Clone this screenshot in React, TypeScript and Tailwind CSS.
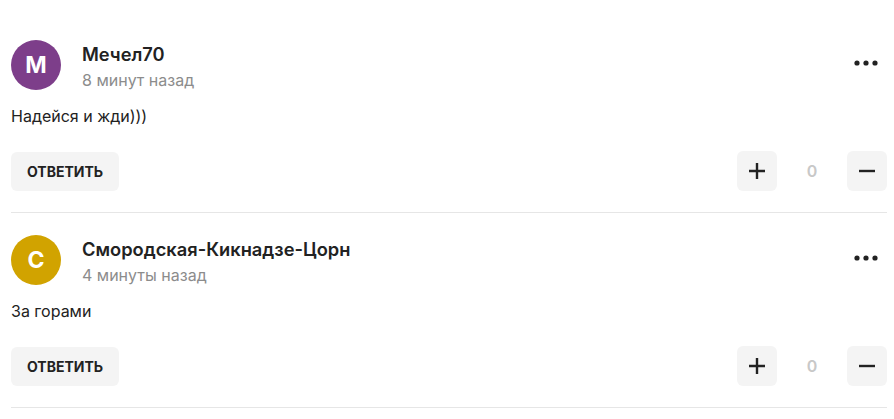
import React from 'react';

interface Comment {
  initial: string;
  color: string;
  name: string;
  time: string;
  text: string;
}

const comments: Comment[] = [
  { initial: 'М', color: 'bg-[#7d3e8a]', name: 'Мечел70', time: '8 минут назад', text: 'Надейся и жди)))' },
  { initial: 'С', color: 'bg-[#d1a300]', name: 'Смородская-Кикнадзе-Цорн', time: '4 минуты назад', text: 'За горами' },
];

const PlusIcon = () => (
  <svg width="18" height="18" viewBox="0 0 18 18" fill="none" stroke="#222" strokeWidth={2.4}>
    <path d="M9 1v16M1 9h16" />
  </svg>
);

const MinusIcon = () => (
  <svg width="18" height="18" viewBox="0 0 18 18" fill="none" stroke="#222" strokeWidth={2.4}>
    <path d="M1 9h16" />
  </svg>
);

const DotsIcon = () => (
  <svg width="24" height="6" viewBox="0 0 24 6" fill="#222">
    <circle cx="3" cy="3" r="2.6" />
    <circle cx="12" cy="3" r="2.6" />
    <circle cx="21" cy="3" r="2.6" />
  </svg>
);

function CommentItem({ c }: { c: Comment }) {
  return (
    <div className="pt-[22px] pb-[21px] border-b border-[#e6e6e6]">
      <div className="flex items-start">
        <div className={`w-[50px] h-[50px] rounded-full ${c.color} flex items-center justify-center text-white text-[23px] font-bold shrink-0`}>
          {c.initial}
        </div>
        <div className="ml-[21px] flex-1 pt-[2px]">
          <div className="text-[18.3px] font-semibold text-[#222] leading-[24px]">{c.name}</div>
          <div className="text-[16px] text-[#8c8c8c] leading-[22px] mt-[3px]">{c.time}</div>
        </div>
        <button className="mt-[20px] mr-[9px]">
          <DotsIcon />
        </button>
      </div>
      <p className="text-[16px] text-[#222] leading-[22px] mt-[14px]">{c.text}</p>
      <div className="flex items-center justify-between mt-6">
        <button className="h-[39px] px-4 rounded-[6px] bg-[#f4f4f4] text-[14px] font-bold text-[#222]">
          ОТВЕТИТЬ
        </button>
        <div className="flex items-center">
          <button className="w-10 h-10 rounded-[6px] bg-[#f4f4f4] flex items-center justify-center">
            <PlusIcon />
          </button>
          <span className="w-[70px] text-center text-[16px] font-semibold text-[#c8c8c8]">0</span>
          <button className="w-10 h-10 rounded-[6px] bg-[#f4f4f4] flex items-center justify-center">
            <MinusIcon />
          </button>
        </div>
      </div>
    </div>
  );
}

export default function App() {
  return (
    <div className="w-[894px] h-[419px] bg-white pl-[11px] pr-[7px] pt-[18px] overflow-hidden" style={{ fontFamily: 'Inter, "Noto Sans", sans-serif' }}>
      {comments.map((c) => (
        <CommentItem key={c.name} c={c} />
      ))}
    </div>
  );
}
